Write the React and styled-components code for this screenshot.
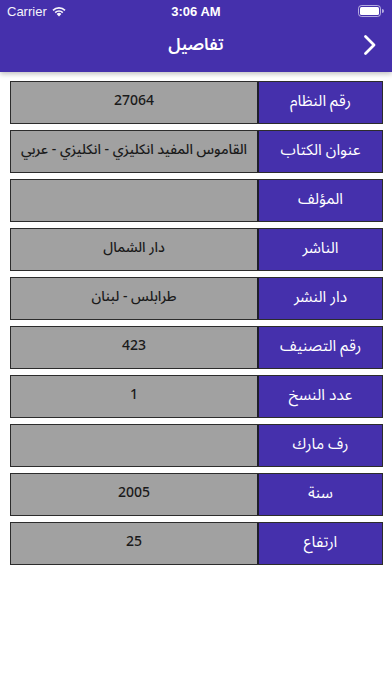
import styled, { createGlobalStyle } from "styled-components";

const rows = [
    { label: "رقم النظام", value: "27064" },
    { label: "عنوان الكتاب", value: "القاموس المفيد انكليزي - انكليزي - عربي" },
    { label: "المؤلف", value: "" },
    { label: "الناشر", value: "دار الشمال" },
    { label: "دار النشر", value: "طرابلس - لبنان" },
    { label: "رقم التصنيف", value: "423" },
    { label: "عدد النسخ", value: "1" },
    { label: "رف مارك", value: "" },
    { label: "سنة", value: "2005" },
    { label: "ارتفاع", value: "25" },
];

export default function App() {
    return (
        <Page>
            <Global />
            <Header>
                <StatusBar>
                    <Carrier>
                        Carrier
                        <svg width="16" height="12" viewBox="0 0 16 12">
                            <path d="M8 11.5 L5.6 9 A3.4 3.4 0 0 1 10.4 9 Z" fill="#fff" />
                            <path d="M3.6 7 A6.2 6.2 0 0 1 12.4 7 L11.2 8.2 A4.5 4.5 0 0 0 4.8 8.2 Z" fill="#fff" />
                            <path d="M1.4 4.8 A9.3 9.3 0 0 1 14.6 4.8 L13.4 6 A7.6 7.6 0 0 0 2.6 6 Z" fill="#fff" />
                        </svg>
                    </Carrier>
                    <Time>3:06 AM</Time>
                    <Battery>
                        <svg width="26" height="12" viewBox="0 0 26 12">
                            <rect x="0.5" y="0.5" width="22" height="11" rx="3" fill="none" stroke="rgba(255,255,255,0.6)" />
                            <rect x="2" y="2" width="19" height="8" rx="1.5" fill="#fff" />
                            <path d="M24 4 v4 a2 2 0 0 0 0 -4z" fill="rgba(255,255,255,0.6)" />
                        </svg>
                    </Battery>
                </StatusBar>
                <NavBar>
                    <Title>تفاصيل</Title>
                    <Back>
                        <svg width="14" height="22" viewBox="0 0 14 22">
                            <path d="M2.5 2.5 L11 11 L2.5 19.5" fill="none" stroke="#fff" strokeWidth="2.8" strokeLinecap="round" strokeLinejoin="round" />
                        </svg>
                    </Back>
                </NavBar>
            </Header>
            <List>
                {rows.map((r) => (
                    <Row key={r.label}>
                        <Label>{r.label}</Label>
                        <Value>{r.value}</Value>
                    </Row>
                ))}
            </List>
        </Page>
    );
}

const Global = createGlobalStyle`
    body{
        margin: 0;
        background: #ffffff;
        font-family: "Noto Sans Arabic", "Noto Sans", "DejaVu Sans", sans-serif;
    }
`;
const Page = styled.div`
    width: 392px;
    height: 696px;
    background: #ffffff;
    overflow: hidden;
`;
const Header = styled.div`
    height: 72px;
    background: #4530ac;
    box-shadow: 0px 2px 5px rgba(0, 0, 0, 0.25);
    display: flex;
    flex-direction: column;
`;
const StatusBar = styled.div`
    height: 22px;
    display: flex;
    align-items: center;
    justify-content: space-between;
    padding: 0 8px 0 7px;
    color: #ffffff;
    font-family: "Liberation Sans", sans-serif;
    font-size: 13px;
    position: relative;
`;
const Carrier = styled.div`
    display: flex;
    align-items: center;
    gap: 4px;
    opacity: 0.95;
`;
const Time = styled.div`
    position: absolute;
    left: 0;
    right: 0;
    text-align: center;
    font-weight: 700;
    font-size: 13px;
`;
const Battery = styled.div`
    display: flex;
    align-items: center;
`;
const NavBar = styled.div`
    flex: 1;
    display: flex;
    align-items: center;
    justify-content: center;
    position: relative;
`;
const Title = styled.p`
    margin: 0 0 4px 0;
    color: #ffffff;
    font-size: 17px;
    font-weight: 600;
`;
const Back = styled.div`
    position: absolute;
    right: 15px;
    top: 12px;
    display: flex;
`;
const List = styled.div`
    display: flex;
    flex-direction: column;
    gap: 6px;
    padding: 9px 9px 0 10px;
`;
const Row = styled.div`
    height: 43px;
    display: flex;
    direction: rtl;
    border: 1.5px solid #2c2c2c;
    box-sizing: border-box;
`;
const Label = styled.div`
    width: 123px;
    flex-shrink: 0;
    background: #4530ac;
    color: #ffffff;
    border-left: 2px solid #1e1e2a;
    display: flex;
    align-items: center;
    justify-content: center;
    padding-bottom: 4px;
    font-size: 15.5px;
`;
const Value = styled.div`
    flex: 1;
    background: #a1a1a1;
    color: #1a1a1a;
    display: flex;
    align-items: center;
    justify-content: center;
    padding-bottom: 4px;
    font-size: 14px;
    font-weight: 500;
    white-space: nowrap;
    overflow: hidden;
`;
